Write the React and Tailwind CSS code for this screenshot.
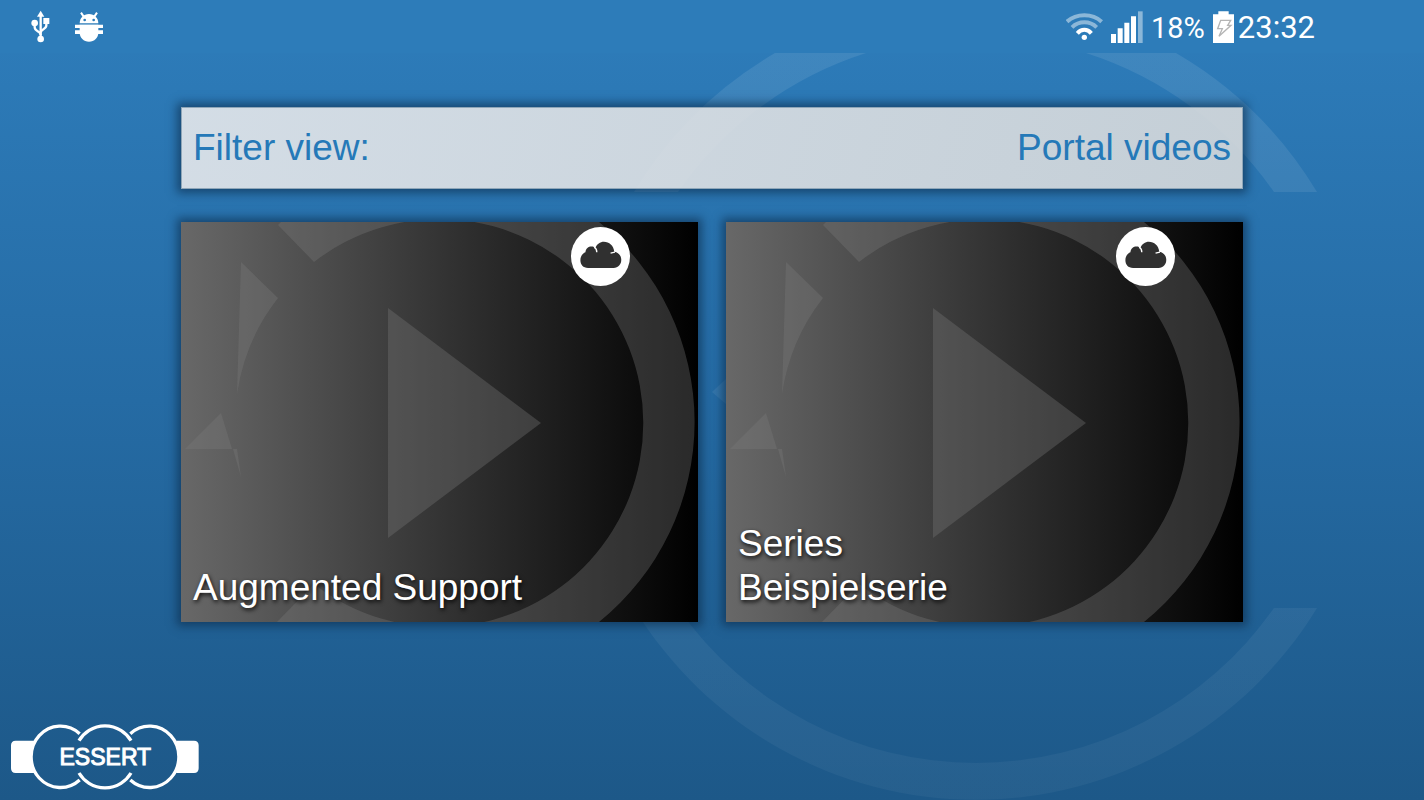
import React, { useState } from 'react'

const videos = [
  { id: 'augmented', lines: ['Augmented Support'] },
  { id: 'series', lines: ['Series', 'Beispielserie'] },
]

const UsbIcon = () => (
  <svg viewBox="92 30 57 99" className="w-[19px] h-[33px]" fill="none" stroke="white" strokeWidth="7">
    <path d="M121 32l11 18h-22z" fill="white" stroke="none" />
    <path d="M121 46V112" />
    <path d="M103 72V82C103 95 121 92 121 105" />
    <path d="M138 70V76C138 89 121 86 121 98" />
    <circle cx="121" cy="117" r="10" fill="white" stroke="none" />
    <circle cx="103" cy="69" r="10" fill="white" stroke="none" />
    <path d="M129 54h18v18h-18z" fill="white" stroke="none" />
  </svg>
)

const BugIcon = () => (
  <svg viewBox="225 36 84 90" className="w-[28px] h-[30px]" fill="white">
    <path d="M239 70C239 54 251 42 267 42s28 12 28 28z" />
    <path d="M243 38l8 12M291 38l-8 12" stroke="white" strokeWidth="6" />
    <circle cx="254" cy="60" r="4" fill="#2d7cb9" />
    <circle cx="281" cy="60" r="4" fill="#2d7cb9" />
    <path d="M225 74h84v10h-84zM225 91h84v11h-84z" />
    <path d="M239 74H295V98C295 112 283 125 267 125S239 112 239 98z" />
  </svg>
)

const WifiIcon = () => (
  <svg viewBox="75 33 111 87" className="w-[37px] h-[29px]" fill="none" stroke="white" strokeWidth="12">
    <path d="M78 62C106 36 154 36 182 62" opacity="0.45" />
    <path d="M93 79C114 59 146 59 167 79" opacity="0.45" />
    <path d="M109 97C121 83 139 83 151 97" />
    <circle cx="130" cy="109" r="8" fill="white" stroke="none" />
  </svg>
)

const SignalIcon = () => (
  <svg viewBox="208 32 96 96" className="w-[32px] h-[32px]" fill="white">
    <path d="M208 101h15v27h-15zM228 84h15v44h-15zM248 67h15v61h-15zM268 48h15v80h-15z" />
    <path d="M289 33h14v95h-14z" opacity="0.45" />
  </svg>
)

const BatteryIcon = () => (
  <svg viewBox="518 32 63 96" className="w-[21px] h-[32px]">
    <path d="M518 42h16v-9h31v9h16v86h-63z" fill="white" />
    <path
      d="M541 60H571L562 75H572L536 108L546 85H532z"
      fill="none"
      stroke="#b5b5b5"
      strokeWidth="4"
    />
  </svg>
)

const CloudIcon = () => (
  <svg viewBox="93 82 176 176" className="w-full h-full">
    <circle cx="181" cy="170" r="88" fill="white" />
    <path
      d="M144 204C129 204 121 194 121 181C121 169 128 160 136 157C137 146 145 140 154 140C160 140 163 142 166 144C170 133 180 126 191 126C207 126 220 137 222 156C235 158 243 168 243 180C243 194 234 204 220 204z"
      fill="#303030"
    />
    <path d="M162 142C167 145 170 150 170 157M211 160L224 157" fill="none" stroke="white" strokeWidth="4" />
  </svg>
)

const EssertLogo = () => (
  <svg viewBox="32 41 564 198" className="w-[188px] h-[66px]" role="img" aria-label="Essert">
    <g fill="white">
      <path d="M102 91H46Q32 91 32 105V174Q32 188 46 188H102Q86 139 102 91z" />
      <path d="M527 91H581Q595 91 595 105V174Q595 188 581 188H527Q543 139 527 91z" />
    </g>
    <g fill="none" stroke="white" strokeWidth="10">
      <path d="M238 70A88 92 0 1 0 238 209" />
      <path d="M236 91A91 92 0 0 1 392 91" />
      <path d="M236 188A91 92 0 0 0 392 188" />
      <path d="M390 70A88 92 0 1 1 390 209" />
    </g>
    <text
      x="315"
      y="164"
      textAnchor="middle"
      fontSize="69"
      fill="white"
      stroke="white"
      strokeWidth="3"
      fontFamily="'Liberation Sans', Arial, sans-serif"
    >
      ESSERT
    </text>
  </svg>
)

const PageBackground = () => (
  <svg
    viewBox="0 0 1424 800"
    preserveAspectRatio="xMidYMid slice"
    className="absolute inset-0 w-full h-full"
    aria-hidden="true"
  >
    <defs>
      <linearGradient id="ring" gradientUnits="userSpaceOnUse" x1="0" y1="50" x2="0" y2="800">
        <stop offset="0" stopColor="white" stopOpacity="0.09" />
        <stop offset="1" stopColor="white" stopOpacity="0.04" />
      </linearGradient>
    </defs>
    <g fill="url(#ring)">
      <path d="M775 53H866A364 364 0 0 0 678 192H634A400 400 0 0 1 775 53z" />
      <path d="M1086 53H1176A400 400 0 0 1 1317 192H1274A364 364 0 0 0 1086 53z" />
      <path d="M634 608H678A364 364 0 0 0 1274 608H1317A400 400 0 0 1 634 608z" />
      <path d="M712 392L740 366V416z" />
    </g>
  </svg>
)

const CardArtwork = () => (
  <svg
    viewBox="0 0 517 400"
    preserveAspectRatio="xMidYMid slice"
    className="absolute inset-0 w-full h-full"
    aria-hidden="true"
  >
    <g fill="#7a7a7a" fillOpacity="0.34">
      <path d="M100 0L97 3L133 40A204 204 0 1 1 133 362L96 400H418A257 257 0 0 0 418 0z" />
      <path d="M207 86L360 201L207 316z" />
      <path d="M60 40L97 76Q64 118 56 172z" />
      <path d="M40 191L51 227H4z" />
      <path d="M52 227H56L60 255z" />
    </g>
  </svg>
)

const StatusBar = () => (
  <header className="relative flex items-center justify-between h-[53px] pl-[31px] pr-[109px] bg-[#2d7cb9] font-[Roboto,sans-serif] text-white">
    <div className="flex items-center gap-[25px]">
      <UsbIcon />
      <BugIcon />
    </div>
    <div className="flex items-center">
      <WifiIcon />
      <div className="flex items-center gap-2 ml-2">
        <SignalIcon />
        <span className="pt-[3px] text-[29px] leading-8">18%</span>
        <BatteryIcon />
      </div>
      <span className="ml-1 pt-[3px] text-[31px] leading-8">23:32</span>
    </div>
  </header>
)

const VideoCard = ({ video }) => (
  <a
    href={`#${video.id}`}
    className="relative flex items-end aspect-[517/400] overflow-hidden px-3 pb-3 bg-linear-to-r/srgb from-[#686868] to-black shadow-[0_0_9px_4px_rgba(10,40,70,0.6)]"
  >
    <CardArtwork />
    <span className="absolute top-[5px] right-[68px] size-[59px]">
      <CloudIcon />
    </span>
    <span className="relative text-[37px] leading-[44px] text-white [text-shadow:1px_2px_4px_rgba(0,0,0,0.9)]">
      {video.lines.map((line) => (
        <span key={line} className="block">
          {line}
        </span>
      ))}
    </span>
  </a>
)

export default function App() {
  const [filter] = useState('Portal videos')

  return (
    <div className="relative flex flex-col min-h-screen bg-linear-to-b/srgb from-[#2e7dbb] via-[#256ba4] to-[#1d5888] font-['Liberation_Sans',Arial,sans-serif]">
      <PageBackground />
      <StatusBar />

      <main className="relative w-full max-w-[1062px] mx-auto pt-[54px]">
        {/* Filter */}
        <button
          type="button"
          className="flex items-center justify-between w-full h-[82px] px-[11px] border border-[#8fa6b8] bg-linear-to-r/srgb from-[#e6e8eb]/90 to-[#d6d9db]/90 text-[37px] leading-[44px] text-[#2579b8] shadow-[0_0_9px_4px_rgba(10,40,70,0.6)]"
        >
          <span>Filter view:</span>
          <span>{filter}</span>
        </button>

        {/* Videos */}
        <div className="grid grid-cols-2 gap-7 mt-[33px]">
          {videos.map((video) => (
            <VideoCard key={video.id} video={video} />
          ))}
        </div>
      </main>

      <footer className="relative mt-auto pl-[11px] pb-[10px]">
        <EssertLogo />
      </footer>
    </div>
  )
}
